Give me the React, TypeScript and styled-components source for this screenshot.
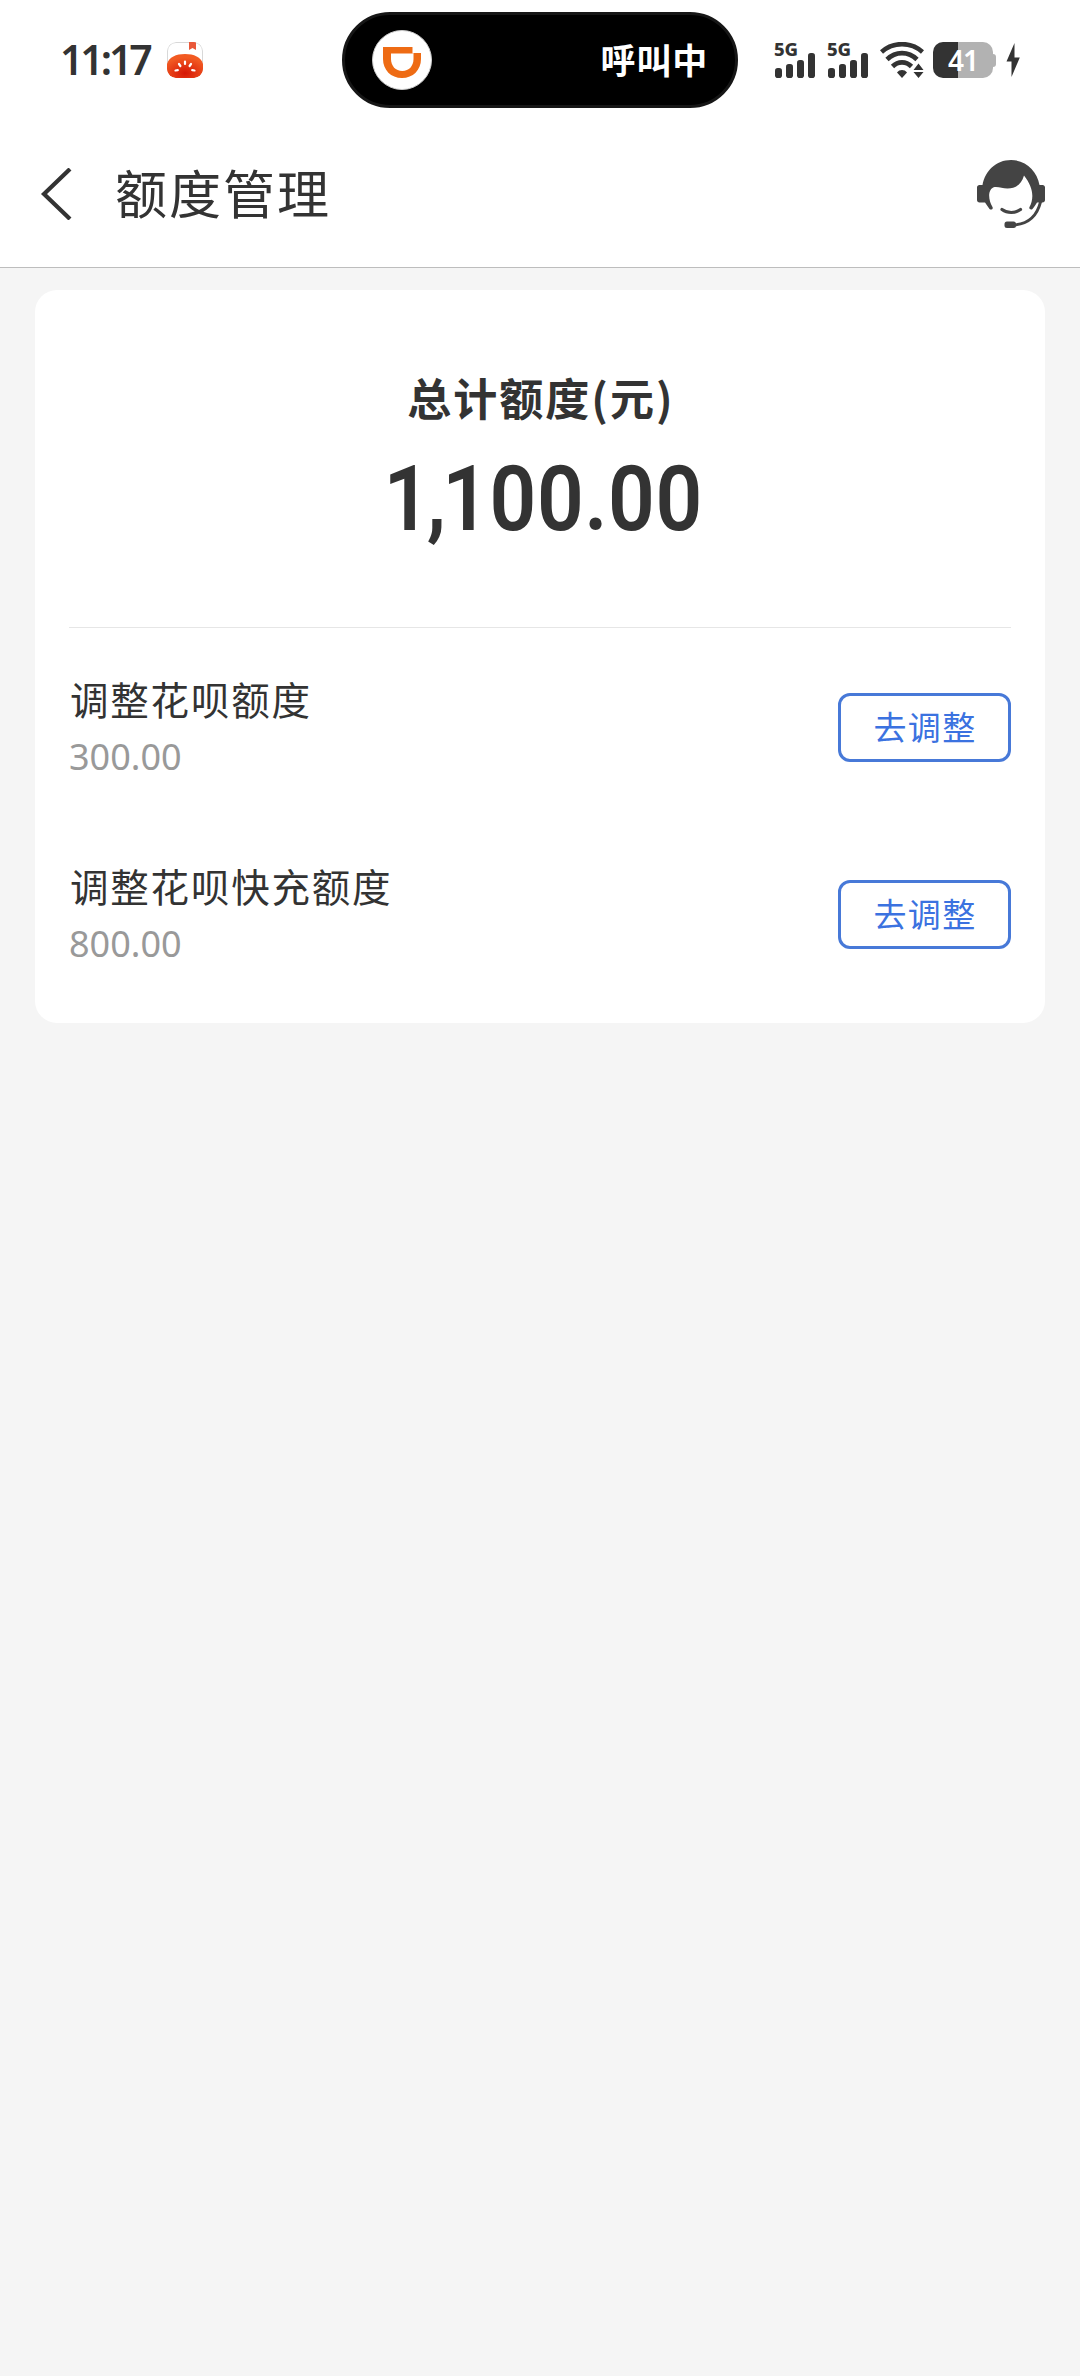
import React from 'react';
import styled, { createGlobalStyle } from 'styled-components';

const INK = '#333333';

const GlobalStyle = createGlobalStyle`
  *, *::before, *::after { box-sizing: border-box; }
  body {
    margin: 0;
    background: #f5f5f5;
    color: ${INK};
    font-family: "Noto Sans", "Noto Sans CJK SC", sans-serif;
  }
  h1, h2, p { margin: 0; font-weight: 400; }
  svg { display: block; flex: none; }
`;

const Screen = styled.div`
  width: 1080px;
  min-height: 2376px;
  background: #f5f5f5;
`;

const StatusBar = styled.div`
  display: grid;
  grid-template-columns: 1fr 396px 1fr;
  align-items: center;
  height: 120px;
  background: #fff;
`;

const StatusLeft = styled.div`
  display: flex;
  align-items: center;
  padding-left: 60px;
`;

const Clock = styled.span`
  width: 107px;
  padding-bottom: 2px;
  font-size: 41px;
  line-height: 48px;
  font-weight: 600;
  letter-spacing: -3.1px;
  white-space: nowrap;
`;

const Island = styled.div`
  display: flex;
  align-items: center;
  justify-content: space-between;
  height: 96px;
  padding: 0 27px 0 27px;
  border: 3px solid #161616;
  border-radius: 48px;
  background: #000;
`;

const IslandText = styled.span`
  padding-bottom: 3px;
  color: #fff;
  font-family: "Noto Sans CJK SC", sans-serif;
  font-size: 35px;
  line-height: 48px;
  font-weight: 700;
  letter-spacing: 0.8px;
`;

const StatusRight = styled.div`
  display: flex;
  align-items: center;
  padding-left: 36px;
`;

const Signal = styled.div`
  display: flex;
  flex-direction: column;
  width: 53px;
  height: 36px;
`;

const SignalLabel = styled.span`
  height: 11px;
  font-size: 18.5px;
  line-height: 14px;
  font-weight: 800;
  letter-spacing: -0.3px;
`;

const WifiBox = styled.div`
  width: 53px;
`;

const Battery = styled.div`
  display: flex;
  align-items: center;
  width: 73px;
`;

const BatteryBody = styled.div<{ $level: number }>`
  display: flex;
  align-items: center;
  justify-content: center;
  width: 60px;
  height: 36px;
  border-radius: 10px;
  background: linear-gradient(to right, ${INK} ${p => p.$level}%, #b2b2b2 ${p => p.$level}%);
  color: #fff;
  font-size: 28px;
  line-height: 36px;
  font-weight: 600;
  letter-spacing: -1px;
`;

const BatteryTip = styled.div`
  width: 3px;
  height: 13px;
  border-radius: 0 3px 3px 0;
  background: #b2b2b2;
`;

const NavBar = styled.header`
  display: flex;
  align-items: center;
  height: 148px;
  padding: 0 35px 0 40px;
  border-bottom: 1px solid #bdbdbd;
  background: #fff;
`;

const IconButton = styled.button`
  display: block;
  padding: 0;
  border: 0;
  background: none;
`;

const NavTitle = styled.h1`
  flex: 1;
  margin-left: 43px;
  padding-bottom: 4px;
  font-family: "Noto Sans CJK SC", sans-serif;
  font-size: 52px;
  line-height: 76px;
  letter-spacing: 2px;
`;

const Card = styled.main`
  margin: 22px 35px 0;
  height: 733px;
  padding: 0 34px;
  border-radius: 22px;
  background: #fff;
`;

const Total = styled.section`
  display: flex;
  flex-direction: column;
  align-items: center;
  height: 338px;
  padding-top: 75px;
  border-bottom: 1px solid #e6e6e6;
`;

const TotalLabel = styled.h2`
  padding-left: 2px;
  font-family: "Noto Sans CJK SC", sans-serif;
  font-size: 44px;
  line-height: 64px;
  font-weight: 700;
  letter-spacing: 2px;
`;

const TotalAmount = styled.p`
  margin-top: 17px;
  padding-left: 6px;
  font-family: Roboto, sans-serif;
  font-size: 91px;
  line-height: 106px;
  font-weight: 600;
  letter-spacing: 0.6px;
  transform: scaleX(0.9);

  &::first-letter {
    letter-spacing: -4px;
  }
`;

const ItemList = styled.div`
  padding-top: 6px;
`;

const Item = styled.section`
  display: flex;
  align-items: center;
  justify-content: space-between;
  height: 187px;
`;

const ItemInfo = styled.div`
  padding-bottom: 1px;
`;

const ItemName = styled.h2`
  padding-left: 1px;
  font-family: "Noto Sans CJK SC", sans-serif;
  font-size: 38.5px;
  line-height: 56px;
  letter-spacing: 1.8px;
`;

const ItemValue = styled.p`
  margin-top: 4px;
  color: #999;
  font-size: 36px;
  line-height: 54px;
`;

const AdjustButton = styled.button`
  width: 173px;
  height: 69px;
  padding: 0 0 3px 1px;
  border: 3px solid #4779d8;
  border-radius: 12px;
  background: #fff;
  color: #3b72e0;
  font-family: "Noto Sans CJK SC", sans-serif;
  font-size: 33px;
  line-height: 48px;
  letter-spacing: 1.3px;
`;

const TomatoIcon = () => (
  <svg width="36" height="36" viewBox="0 0 36 36">
    <defs>
      <radialGradient id="tomato" cx="50%" cy="80%" r="65%">
        <stop offset="0" stopColor="#d51605" />
        <stop offset="1" stopColor="#f25a22" />
      </radialGradient>
      <clipPath id="tile"><rect width="36" height="36" rx="9" /></clipPath>
    </defs>
    <g clipPath="url(#tile)">
      <rect x="0.5" y="0.5" width="35" height="35" rx="8.5" fill="#fff" stroke="#d8d8d8" />
      <path d="M22 0h7v8l-3.5-2L22 8z" fill="#e9583a" />
      <path d="M0 22C2 15 9 12 18 12s16 3 18 10v7c-2 5-6 7-10 7H10c-5 0-8-2-10-7z" fill="url(#tomato)" />
    </g>
    <g stroke="#fff" strokeWidth="2.2" strokeLinecap="round">
      <path d="M18 19.5v2.5M12 22l1.4 2M24 22l-1.4 2M8.500 28.500l2.300-.4M27.500 28.500l-2.300-.4" />
    </g>
  </svg>
);

const RideLogo = () => (
  <svg width="60" height="60" viewBox="0 0 60 60">
    <circle cx="30" cy="30" r="29.500" fill="#fff" stroke="#ccc" />
    <path d="M11 17h30v6h8v6c0 11-8 19-19 19S11 40 11 29z" fill="#ee6b14" />
    <path d="M19 23.500h22.500V29c0 7-4.500 12-11.200 12S19 36 19 29z" fill="#fff" />
    <path d="M40.500 17l2 0-1 6.500h-1z" fill="#fff" />
  </svg>
);

const SignalBars = () => (
  <svg width="42" height="25" viewBox="0 0 42 25" fill={INK}>
    <rect x="1" y="15" width="7" height="10" rx="2.800" />
    <rect x="12" y="11" width="7" height="14" rx="2.800" />
    <rect x="23" y="7" width="7" height="18" rx="2.800" />
    <rect x="34" y="0" width="7" height="25" rx="2.800" />
  </svg>
);

const WifiIcon = () => (
  <svg width="44" height="36" viewBox="0 0 44 36">
    <g fill="none" stroke={INK} strokeWidth="4.600">
      <path d="M1.500 10C13 -.5 31 -.5 42.500 10" />
      <path d="M7 17.500C15.500 9 28.500 9 37 17.500" />
      <path d="M12.500 24.500C18 19 26 19 31.500 24.500" />
    </g>
    <path d="M17 30.500c2.500-3.300 7.500-3.300 10 0L22 36z" fill={INK} />
    <path d="M33.500 28l5-6.500 5 6.500zM33.500 30h10l-5 6z" fill={INK} />
  </svg>
);

const BoltIcon = () => (
  <svg width="14" height="34" viewBox="0 0 14 34" fill={INK}>
    <path d="M8.500 0L.5 18.500h5L5.500 34 13.800 14.500H8.500z" />
  </svg>
);

const BackIcon = () => (
  <svg width="32" height="52" viewBox="0 0 32 52">
    <path d="M30 1L4 26l26 25" fill="none" stroke={INK} strokeWidth="4.200" />
  </svg>
);

const ServiceIcon = () => (
  <svg width="68" height="68" viewBox="0 0 68 68">
    <path
      d="M0 27.500c0-1.500 1-2.500 2.500-2.500H5.500C8 11 19 0 34 0s26 11 28.500 25H65.500c1.500 0 2.500 1 2.500 2.500V40c0 1.500-1 2.500-2.500 2.500H60c-1 2-3 4.500-4.500 6.500-1.500 1.500-4-.2-3-2 5-9.500 3.500-20-5.500-31.500-2.500 9-8.500 13-16.500 13-5 0-8.500-2-13-1.500-7 2-6.500 12.500-2 20 1 2-1.500 3.500-3 2L8 42.500H2.500C1 42.500 0 41.500 0 40z"
      fill="#444"
    />
    <g fill="none" stroke="#444" strokeLinecap="round">
      <path d="M25 49.500c5.500 4 13 4 18.500 0" strokeWidth="3.200" />
      <path d="M63.500 42C60 56 51 64 37 65" strokeWidth="3" />
    </g>
    <rect x="27.500" y="61.500" width="11.500" height="6.500" rx="2.500" fill="#444" />
  </svg>
);

const items = [
  { name: '调整花呗额度', value: '300.00' },
  { name: '调整花呗快充额度', value: '800.00' },
];

export default function App() {
  return (
    <Screen>
      <GlobalStyle />
      <StatusBar>
        <StatusLeft>
          <Clock>11:17</Clock>
          <TomatoIcon />
        </StatusLeft>
        <Island>
          <RideLogo />
          <IslandText>呼叫中</IslandText>
        </Island>
        <StatusRight>
          {[1, 2].map(sim => (
            <Signal key={sim}>
              <SignalLabel>5G</SignalLabel>
              <SignalBars />
            </Signal>
          ))}
          <WifiBox><WifiIcon /></WifiBox>
          <Battery>
            <BatteryBody $level={41}>41</BatteryBody>
            <BatteryTip />
          </Battery>
          <BoltIcon />
        </StatusRight>
      </StatusBar>
      <NavBar>
        <IconButton aria-label="返回"><BackIcon /></IconButton>
        <NavTitle>额度管理</NavTitle>
        <IconButton aria-label="客服"><ServiceIcon /></IconButton>
      </NavBar>
      <Card>
        <Total>
          <TotalLabel>总计额度(元)</TotalLabel>
          <TotalAmount>1,100.00</TotalAmount>
        </Total>
        <ItemList>
          {items.map(item => (
            <Item key={item.name}>
              <ItemInfo>
                <ItemName>{item.name}</ItemName>
                <ItemValue>{item.value}</ItemValue>
              </ItemInfo>
              <AdjustButton>去调整</AdjustButton>
            </Item>
          ))}
        </ItemList>
      </Card>
    </Screen>
  );
}
